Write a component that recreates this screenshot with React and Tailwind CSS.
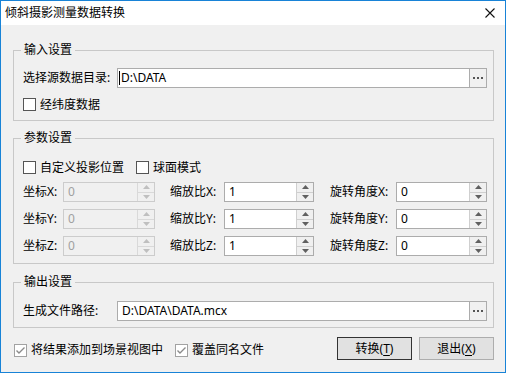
import React from 'react';

const font = "font-['Noto_Sans','Noto_Sans_CJK_SC',sans-serif]";

const UpArrow = ({ color }) => (
    <svg width="7" height="4" viewBox="0 0 7 4"><path d="M0 4 L3.5 0 L7 4 Z" fill={color} /></svg>
);

const DownArrow = ({ color }) => (
    <svg width="7" height="4" viewBox="0 0 7 4"><path d="M0 0 L3.5 4 L7 0 Z" fill={color} /></svg>
);

const CheckBox = ({ checked, label, light }) => (
    <div className="flex items-center h-[13px]">
        <div className={light
            ? 'w-[13px] h-[13px] border border-[#a2a2a2] bg-white flex items-center justify-center shrink-0'
            : 'w-[13px] h-[13px] border border-[#555555] bg-white flex items-center justify-center shrink-0'}>
            {checked && (
                <svg width="11" height="11" viewBox="0 0 11 11">
                    <path d="M1.5 5.5 L4 8 L9.5 2.5" stroke="#8a8a8a" strokeWidth="1.4" fill="none" />
                </svg>
            )}
        </div>
        <span className="ml-[4px] leading-[16px] whitespace-nowrap">{label}</span>
    </div>
);

const Spin = ({ value, disabled, width }) => (
    <div
        className={disabled
            ? 'flex h-[20px] border border-[#cccccc] bg-[#f0f0f0] text-[#a0a0a0]'
            : 'flex h-[20px] border border-[#acacac] bg-white text-black'}
        style={{ width }}
    >
        <div className="flex-1 pl-[4px] leading-[18px]">{value}</div>
        <div className={disabled
            ? 'w-[17px] flex flex-col border-l border-[#d9d9d9]'
            : 'w-[17px] flex flex-col border-l border-[#cfcfcf]'}>
            <div className="flex-1 flex items-center justify-center bg-[#f0f0f0]">
                <UpArrow color={disabled ? '#bfbfbf' : '#606060'} />
            </div>
            <div className={disabled
                ? 'flex-1 flex items-center justify-center bg-[#f0f0f0] border-t border-[#d9d9d9]'
                : 'flex-1 flex items-center justify-center bg-[#f0f0f0] border-t border-[#cfcfcf]'}>
                <DownArrow color={disabled ? '#bfbfbf' : '#606060'} />
            </div>
        </div>
    </div>
);

const PathInput = ({ value, caret }) => (
    <div className="flex-1 flex h-[20px] border border-[#acacac] bg-white">
        <div className={caret
            ? 'flex-1 flex items-center pl-[1px] leading-[18px] text-black'
            : 'flex-1 flex items-center pl-[4px] leading-[18px] text-black'}>
            {caret && <span className="w-[1px] h-[14px] bg-black mr-[1px]" />}
            <span>{value}</span>
        </div>
        <div className="w-[17px] border-l border-[#acacac] bg-[#f0f0f0] flex items-center justify-center">
            <svg width="10" height="2" viewBox="0 0 10 2">
                <rect x="0" y="0" width="2" height="2" fill="#555" />
                <rect x="4" y="0" width="2" height="2" fill="#555" />
                <rect x="8" y="0" width="2" height="2" fill="#555" />
            </svg>
        </div>
    </div>
);

const Group = ({ title, className, children }) => (
    <fieldset className={`border border-[#c8c8c8] ${className}`}>
        <legend className="ml-[7px] px-[3px] leading-[16px] text-black">{title}</legend>
        {children}
    </fieldset>
);

const rows = ['X', 'Y', 'Z'];

export default function App() {
    return (
        <div className={`w-[506px] h-[373px] border border-[#1883d7] flex flex-col text-[12px] text-black ${font}`}>
            {/* title bar */}
            <div className="h-[24px] bg-white flex items-center justify-between pl-[4px] pr-[10px]">
                <span className="leading-[16px]">倾斜摄影测量数据转换</span>
                <svg width="10" height="10" viewBox="0 0 10 10">
                    <path d="M0.5 0.5 L9.5 9.5 M9.5 0.5 L0.5 9.5" stroke="#111" strokeWidth="1.1" />
                </svg>
            </div>

            <div className="flex-1 bg-[#f0f0f0] pl-[12px] pr-[11px] pt-[17px]">
                <Group title="输入设置" className="">
                    <div className="pt-[10px] pb-[9px] pl-[9px] pr-[6px]">
                        <div className="flex items-center">
                            <span className="w-[94px] shrink-0 whitespace-nowrap leading-[20px]">选择源数据目录:</span>
                            <PathInput value="D:\DATA" caret />
                        </div>
                        <div className="mt-[10px]">
                            <CheckBox label="经纬度数据" />
                        </div>
                    </div>
                </Group>

                <Group title="参数设置" className="mt-[9px]">
                    <div className="pt-[15px] pb-[7px] pl-[9px] pr-[6px]">
                        <div className="flex items-center gap-[12px]">
                            <CheckBox label="自定义投影位置" />
                            <CheckBox label="球面模式" />
                        </div>
                        <div className="mt-[8px] flex flex-col gap-[7px]">
                            {rows.map(axis => (
                                <div key={axis} className="flex items-center leading-[20px] whitespace-nowrap">
                                    <span className="w-[40px] shrink-0">坐标{axis}:</span>
                                    <Spin value="0" disabled width={92} />
                                    <span className="ml-[15px] w-[54px] shrink-0">缩放比{axis}:</span>
                                    <Spin value="1" width={90} />
                                    <span className="ml-[16px] w-[66px] shrink-0">旋转角度{axis}:</span>
                                    <Spin value="0" width={91} />
                                </div>
                            ))}
                        </div>
                    </div>
                </Group>

                <Group title="输出设置" className="mt-[10px]">
                    <div className="pt-[11px] pb-[6px] pl-[9px] pr-[6px]">
                        <div className="flex items-center">
                            <span className="w-[94px] shrink-0 whitespace-nowrap leading-[20px]">生成文件路径:</span>
                            <PathInput value="D:\DATA\DATA.mcx" />
                        </div>
                    </div>
                </Group>

                <div className="mt-[9px] flex items-center justify-between pl-[1px] pr-[0px]">
                    <div className="flex items-center gap-[12px] pt-[3px]">
                        <CheckBox checked light label="将结果添加到场景视图中" />
                        <CheckBox checked light label="覆盖同名文件" />
                    </div>
                    <div className="flex gap-[7px]">
                        <button className="w-[75px] h-[23px] border border-[#333333] bg-[#e1e1e1] leading-[16px]">
                            转换(<span className="underline underline-offset-2">T</span>)
                        </button>
                        <button className="w-[75px] h-[23px] border border-[#adadad] bg-[#e1e1e1] leading-[16px]">
                            退出(<span className="underline underline-offset-2">X</span>)
                        </button>
                    </div>
                </div>
            </div>
        </div>
    );
}
